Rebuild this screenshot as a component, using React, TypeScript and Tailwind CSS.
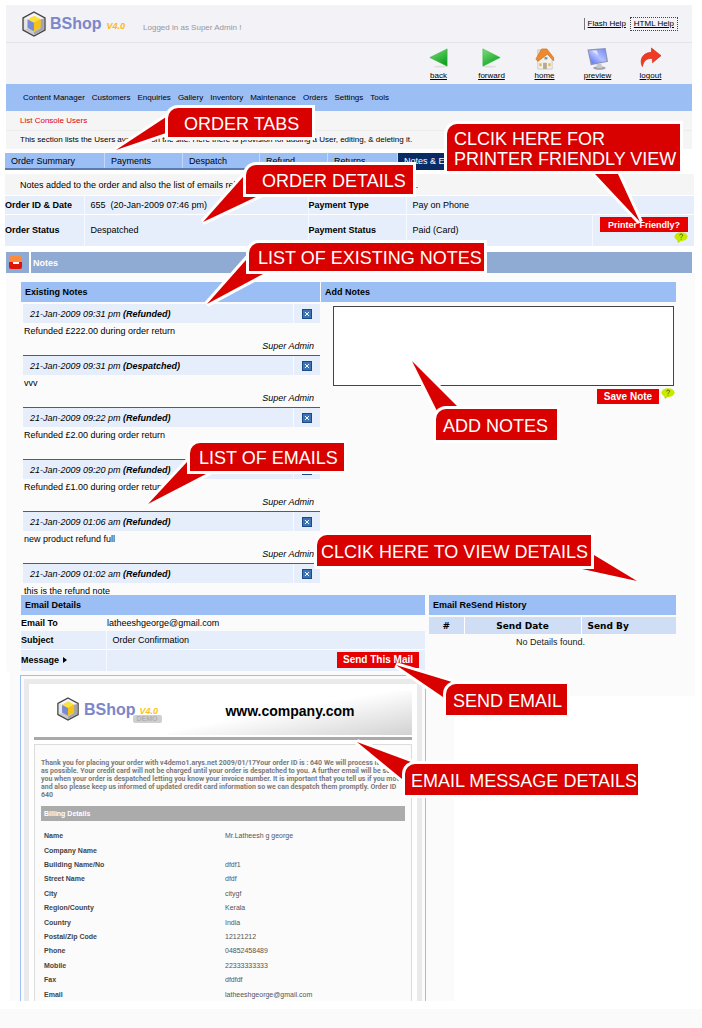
import React from "react";

const navItems = ["Content Manager", "Customers", "Enquiries", "Gallery", "Inventory", "Maintenance", "Orders", "Settings", "Tools"];

const notes = [
  { date: "21-Jan-2009 09:31 pm", status: "(Refunded)", text: "Refunded £222.00 during order return", by: "Super Admin" },
  { date: "21-Jan-2009 09:31 pm", status: "(Despatched)", text: "vvv", by: "Super Admin" },
  { date: "21-Jan-2009 09:22 pm", status: "(Refunded)", text: "Refunded £2.00 during order return", by: "" },
  { date: "21-Jan-2009 09:20 pm", status: "(Refunded)", text: "Refunded £1.00 during order return", by: "Super Admin" },
  { date: "21-Jan-2009 01:06 am", status: "(Refunded)", text: "new product refund full", by: "Super Admin" },
  { date: "21-Jan-2009 01:02 am", status: "(Refunded)", text: "this is the refund note", by: "" },
];

const billing: [string, string][] = [
  ["Name", "Mr.Latheesh g george"],
  ["Company Name", ""],
  ["Building Name/No", "dfdf1"],
  ["Street Name", "dfdf"],
  ["City", "citygf"],
  ["Region/County", "Kerala"],
  ["Country", "India"],
  ["Postal/Zip Code", "12121212"],
  ["Phone", "04852458489"],
  ["Mobile", "22333333333"],
  ["Fax", "dfdfdf"],
  ["Email", "latheeshgeorge@gmail.com"],
];

function Cube({ className }: { className: string }) {
  return (
    <svg viewBox="0 0 24 26" className={className} aria-hidden="true">
      <path d="M12 1 L23 7 V19 L12 25 L1 19 V7 Z" fill="#c9cace" stroke="#444" strokeWidth="1.3" />
      <path d="M12 2.2 L21.8 7.6 L18.5 8.6 L12 5 L5.5 8.6 L2.2 7.6 Z" fill="#f6f6f8" />
      <path d="M2.2 7.6 L5.5 8.6 V17.5 L2.2 18.4 Z" fill="#e6e6ea" />
      <path d="M21.8 7.6 L18.5 8.6 V17.5 L12 21 V23.8 L21.8 18.4 Z" fill="#a4a5ab" />
      <path d="M5.6 8.6 L12.5 4.8 L18.6 8 L12 11.8 Z" fill="#ffe03c" />
      <path d="M18.6 8 V16.4 L12 20.2 V11.8 Z" fill="#f6c313" />
      <path d="M5.6 8.6 L12 11.8 V20.2 L5.6 16.8 Z" fill="#7a8ad4" />
    </svg>
  );
}

function ToolIcon({ name }: { name: string }) {
  return (
    <svg viewBox="0 0 24 24" className="h-[23px] w-[23px]" aria-hidden="true">
      <defs>
        <linearGradient id={"g-" + name} x1="0" y1="0" x2="0.6" y2="1">
          <stop offset="0" stopColor="#7be07a" />
          <stop offset="1" stopColor="#12a022" />
        </linearGradient>
        <linearGradient id={"s-" + name} x1="0" y1="1" x2="1" y2="0">
          <stop offset="0" stopColor="#4c6cf0" />
          <stop offset="0.5" stopColor="#b3c0ff" />
          <stop offset="1" stopColor="#6f88f5" />
        </linearGradient>
      </defs>
      {name === "back" && (
        <>
          <ellipse cx="14" cy="20.5" rx="7" ry="1" fill="#ddd" />
          <path d="M3 11 L21 2 V20 Z" fill={"url(#g-" + name + ")"} stroke="#2eb53a" strokeWidth="0.6" />
        </>
      )}
      {name === "forward" && (
        <>
          <ellipse cx="10" cy="20.5" rx="7" ry="1" fill="#ddd" />
          <path d="M3 2 L21 11 L3 20 Z" fill={"url(#g-" + name + ")"} stroke="#2eb53a" strokeWidth="0.6" />
        </>
      )}
      {name === "home" && (
        <>
          <path d="M5 3 H8 V9 H5 Z" fill="#e8e4e0" stroke="#a98" strokeWidth="0.5" />
          <path d="M5 12 L13 5 L20 12 V23 H5 Z" fill="#f4f1ea" stroke="#b9b3aa" strokeWidth="0.6" />
          <path d="M3 12.5 L9 2 H14.5 L21.5 11 V14.5 L15 7.5 L5 15 Z" fill="#ee8a2e" stroke="#c96412" strokeWidth="0.6" />
          <path d="M10.5 16.5 H14.5 V23 H10.5 Z" fill="#b5aa96" />
          <path d="M12 10.5 H15 V13 H12 Z" fill="#7d93b5" />
          <path d="M16 17 H18.5 V20 H16 Z M6.5 17 H9 V20 H6.5 Z" fill="#d8bd6a" />
        </>
      )}
      {name === "preview" && (
        <>
          <ellipse cx="14" cy="22" rx="6.5" ry="1.8" fill="#a2a4aa" />
          <path d="M11 18 L16 17.5 L17 22 H11.5 Z" fill="#c6c8ce" />
          <path d="M1.5 2.5 L20.5 1 L23 15.5 L5 19 Z" fill="#8d93b8" />
          <path d="M3 3.8 L19.5 2.4 L21.6 14.5 L6 17.5 Z" fill={"url(#s-" + name + ")"} />
          <path d="M6 4 L13 9 L11 3.5 Z" fill="#dfe5ff" />
        </>
      )}
      {name === "logout" && (
        <path d="M13 1 L23 9 L14 16.5 V12 C8 11.5 5 14 3.5 20.5 C-0.5 12 5.5 5.5 13 5.5 Z" fill="#ef3b24" stroke="#c9200f" strokeWidth="0.6" />
      )}
    </svg>
  );
}

function HelpBubble() {
  return (
    <svg viewBox="0 0 14 11" className="h-[11px] w-[14px] shrink-0" role="img" aria-label="Help">
      <path d="M3 7 L4 11 L8 8 Z" fill="#b9d800" />
      <ellipse cx="7" cy="4.6" rx="6.6" ry="4.4" fill="#c8ea00" />
      <path d="M5.6 3.4 C5.6 1.6 8.6 1.6 8.6 3.4 C8.6 4.5 7.1 4.5 7.1 5.8 M7.1 6.8 V7.6" fill="none" stroke="#4a5a00" strokeWidth="0.9" />
    </svg>
  );
}

function Callout({ box, points, children }: { box: string; points: string; children: React.ReactNode }) {
  return (
    <div className={"absolute flex items-center whitespace-nowrap pt-[2px] text-[18px] leading-5 text-white " + box}>
      <svg className="absolute left-0 top-0 h-px w-px overflow-visible" aria-hidden="true">
        <polygon points={points} fill="#d90000" stroke="#fff" strokeWidth="6" paintOrder="stroke" />
      </svg>
      <div className="absolute inset-0 rounded-tl-[10px] bg-[#d90000] ring-[3px] ring-white" />
      <span className="relative">{children}</span>
    </div>
  );
}

const subHead = "flex h-5 items-center bg-[#9bbef5] pl-1 text-[9px] font-bold";
const redButton = "bg-[#e60000] font-bold text-white";

export default function App() {
  return (
    <div className="relative overflow-hidden bg-white pt-[5px] font-['Liberation_Sans',Arial,sans-serif] text-[9px] leading-3 text-black">
      <header className="ml-[6px] mr-[10px] bg-[#f2f2f7]">
        <div className="flex h-[38px] items-center border-b border-[#e3e3e8] pl-4">
          <Cube className="h-[26px] w-6" />
          <span className="ml-1 text-[16px] font-bold leading-5 text-[#7b87c8]">BShop</span>
          <span className="ml-[5px] mt-1 text-[9px] font-bold italic text-[#fdb913]">V4.0</span>
          <span className="ml-[18px] mt-2 text-[8px] text-[#96969c]">Logged in as Super Admin !</span>
          <div className="ml-auto mr-[14px] flex items-center text-[8px]">
            <a href="#flash" className="border-l border-[#777] pl-[3px] underline">Flash Help</a>
            <a href="#html" className="ml-1 border border-dotted border-[#444] px-[3px] underline">HTML Help</a>
          </div>
        </div>
        <div className="flex h-[41px] justify-end pr-[15px] text-[8px]">
          {["back", "forward", "home", "preview", "logout"].map((t) => (
            <a key={t} href={"#" + t} className="flex w-[53px] flex-col items-center pt-1 underline">
              <ToolIcon name={t} />
              {t}
            </a>
          ))}
        </div>
        <nav className="flex h-[27px] items-center gap-[7px] bg-[#9bbef5] pl-[17px] text-[8px]">
          {navItems.map((n) => (
            <a key={n} href="#nav">{n}</a>
          ))}
        </nav>
        <h1 className="flex h-5 items-center border-b border-[#ececec] bg-[#f5f5f5] pl-[14px] text-[8px] text-[#e00010]">List Console Users</h1>
        <p className="flex h-[18px] items-center whitespace-nowrap bg-[#f5f5f5] pl-[14px] text-[8px]">
          This section lists the Users available on the site. Here there is provision for adding a User, editing, &amp; deleting it.
        </p>
      </header>

      <nav className="ml-[5px] mr-[19px] mt-1 flex h-[17px] gap-px border-b-2 border-[#5b7bb0] bg-[#c3d8fa]">
        <a href="#t" className="w-[99px] bg-[#9bbef5] pl-[6px] pt-[2px]">Order Summary</a>
        <a href="#t" className="w-[77px] bg-[#9bbef5] pl-[6px] pt-[2px]">Payments</a>
        <a href="#t" className="w-[76px] bg-[#9bbef5] pl-[6px] pt-[2px]">Despatch</a>
        <a href="#t" className="w-[67px] bg-[#9bbef5] pl-[6px] pt-[2px]">Refund</a>
        <a href="#t" className="w-[69px] bg-[#9bbef5] pl-[6px] pt-[2px]">Returns</a>
        <a href="#t" className="-mb-[2px] w-[78px] bg-[#0a2a66] pl-[6px] pt-[2px] text-white">Notes &amp; Emails</a>
        <span className="flex-1 bg-[#9bbef5]" />
      </nav>

      <p className="ml-[5px] mr-2 mt-1 flex h-[21px] items-center whitespace-nowrap bg-[#f5f5f5] pl-[15px]">
        Notes added to the order and also the list of emails related to the order are displayed here. Details &nbsp;.
      </p>

      <table className="ml-[5px] mt-px w-[calc(100%-13px)] table-fixed border-collapse bg-[#e6eefb] text-left">
        <colgroup>
          <col className="w-[79px]" />
          <col className="w-[224px]" />
          <col className="w-[98px]" />
          <col />
          <col className="w-[101px]" />
        </colgroup>
        <tbody>
          <tr className="h-[18px] border-b border-white">
            <th>Order ID &amp; Date</th>
            <td className="border-l border-[#f6f9ff] pl-[6px]">655 &nbsp;(20-Jan-2009 07:46 pm)</td>
            <th className="border-l border-[#f6f9ff]">Payment Type</th>
            <td className="border-l border-[#f6f9ff] pl-[6px]" colSpan={2}>Pay on Phone</td>
          </tr>
          <tr className="h-8">
            <th>Order Status</th>
            <td className="border-l border-[#f6f9ff] pl-[6px]">Despatched</td>
            <th className="border-l border-[#f6f9ff]">Payment Status</th>
            <td className="border-l border-[#f6f9ff] pl-[6px]">Paid (Card)</td>
            <td className="border-l border-[#f6f9ff] pr-[6px]">
              <div className="flex flex-col items-end">
                <button className={redButton + " h-[15px] w-[88px] text-[9px]"}>Printer Friendly?</button>
                <HelpBubble />
              </div>
            </td>
          </tr>
        </tbody>
      </table>

      <div className="ml-[6px] mr-[10px] mt-[6px] flex h-[21px] gap-[2px]">
        <div className="flex w-[23px] items-center bg-[#8faad3] pl-[3px]">
          <button aria-label="Collapse" className="flex h-[13px] w-[13px] items-center justify-center rounded-[2px] bg-linear-to-b from-[#ff8a3c] from-50% to-[#dd1408] to-50%">
            <span className="h-[2px] w-[6px] bg-white" />
          </button>
        </div>
        <h2 className="flex flex-1 items-center bg-[#8faad3] pl-[2px] text-[9px] font-bold text-white">Notes</h2>
      </div>

      <main className="ml-[6px] mr-[7px] bg-[#fbfbfb] pl-[15px] pr-[19px] pt-[9px]">
        <section className="grid h-[313px] grid-cols-[299fr_355fr] gap-px overflow-hidden">
          <div>
            <h3 className={subHead}>Existing Notes</h3>
            <ul className="ml-[2px] mt-[2px]">
              {notes.map((n, i) => (
                <li key={i} className="h-[52px] border-b border-[#5a5288]">
                  <div className="flex h-[19px] gap-px">
                    <div className="flex flex-1 items-center bg-[#e6eefb] pl-[7px] italic">
                      {n.date}&nbsp;<b>{n.status}</b>
                    </div>
                    <div className="flex w-[26px] items-center justify-center bg-[#e6eefb]">
                      <button aria-label="Delete note" className="flex h-[10px] w-[10px] items-center justify-center border border-[#1c4a86] bg-[#3d74b8]">
                        <svg viewBox="0 0 4 4" className="h-1 w-1" aria-hidden="true">
                          <path d="M0 0 L4 4 M4 0 L0 4" stroke="#fff" strokeWidth="1" />
                        </svg>
                      </button>
                    </div>
                  </div>
                  <p className="pl-px pt-[2px]">{n.text}</p>
                  <p className="pr-[6px] pt-[3px] text-right italic">{n.by}</p>
                </li>
              ))}
            </ul>
          </div>
          <div>
            <h3 className={subHead}><label htmlFor="note">Add Notes</label></h3>
            <textarea id="note" className="ml-3 mr-[3px] mt-1 block h-[80px] w-[calc(100%-14px)] resize-none border border-[#444] bg-white p-1 outline-none" />
            <div className="mr-px mt-[2px] flex items-start justify-end gap-[2px]">
              <button className={redButton + " mt-px h-[15px] w-[62px] text-[10px]"}>Save Note</button>
              <HelpBubble />
            </div>
          </div>
        </section>

        <section className="grid grid-cols-[404fr_247fr] gap-1">
          <div>
            <h3 className={subHead}>Email Details</h3>
            <table className="w-full table-fixed border-collapse text-left">
              <colgroup>
                <col className="w-[85px]" />
                <col />
              </colgroup>
              <tbody>
                <tr className="h-4">
                  <th>Email To</th>
                  <td className="pl-px">latheeshgeorge@gmail.com</td>
                </tr>
                <tr className="h-[18px] border-b border-white bg-[#e6eefb]">
                  <th>Subject</th>
                  <td className="border-l border-[#f6f9ff] pl-[6px]">Order Confirmation</td>
                </tr>
                <tr className="h-[22px] bg-[#e6eefb]">
                  <th>Message <span className="ml-px inline-block h-0 w-0 border-y-[3px] border-l-4 border-y-transparent border-l-black" /></th>
                  <td className="border-l border-[#f6f9ff] pr-[6px] text-right">
                    <button className={redButton + " ml-auto block h-4 w-[82px] text-[10px]"}>Send This Mail</button>
                  </td>
                </tr>
              </tbody>
            </table>
          </div>
          <div>
            <h3 className={subHead}>Email ReSend History</h3>
            <table className="mt-[2px] w-full table-fixed border-collapse">
              <thead>
                <tr className="h-[17px] bg-[#cfddf5] font-['DejaVu_Sans',sans-serif]">
                  <th className="w-[35px]">#</th>
                  <th className="w-[117px] border-x border-white">Send Date</th>
                  <th className="pl-[6px] text-left">Send By</th>
                </tr>
              </thead>
              <tbody>
                <tr className="h-4">
                  <td colSpan={3} className="pr-1 text-center text-[#222]">No Details found.</td>
                </tr>
              </tbody>
            </table>
          </div>
        </section>
      </main>

      <div className="ml-[10px] mr-[7px] grid grid-cols-[444fr_241fr] items-start">
        <article className="h-[330px] overflow-hidden bg-[#fbfbfb] pl-[10px] pr-7 pt-1">
          <div className="border border-[#9bbef5] bg-[#fbfbfb] px-[3px] pt-[3px]">
            <div className="border-x-[5px] border-t-[5px] border-[#eaeaea] bg-white px-[5px] pt-[7px]">
              <div className="flex h-[44px]">
                <div className="flex w-[134px] items-center pl-[22px]">
                  <Cube className="mb-2 h-6 w-6" />
                  <span className="mb-[6px] ml-1 text-[16px] font-bold leading-5 text-[#7b87c8]">BShop</span>
                  <div className="relative mb-1 ml-1">
                    <span className="text-[9px] font-bold italic text-[#fdc21a]">V4.0</span>
                    <span className="absolute -left-[7px] top-[10px] rounded-[2px] bg-[#cfcfcf] px-1 text-[7px] font-bold leading-[8px] text-[#b0b0b0]">DEMO</span>
                  </div>
                </div>
                <div className="flex flex-1 items-center justify-center bg-linear-to-br from-white from-45% to-[#d2d2d2] pb-1 text-[14px] font-bold">
                  www.company.com
                </div>
              </div>
              <div className="mt-[2px] h-[3px] bg-[#a9a9a9]" />
              <div className="mt-1 border-x border-t border-[#dcdcdc] bg-[#fbfbfb] px-[6px] pt-[14px]">
                <p className="whitespace-nowrap font-[Roboto,sans-serif] text-[7px] font-bold leading-[8px] text-[#7a7a7a]">
                  Thank you for placing your order with v4demo1.arys.net 2009/01/17Your order ID is : 640 We will process it as soon<br />
                  as possible. Your credit card will not be charged until your order is despatched to you. A further email will be sent<br />
                  you when your order is despatched letting you know your invoice number. It is important that you tell us if you move<br />
                  and also please keep us informed of updated credit card information so we can despatch them promptly. Order ID<br />
                  640
                </p>
                <h4 className="mt-[7px] flex h-[15px] items-center bg-[#ababab] pl-[3px] text-[7px] font-bold text-white">Billing Details</h4>
                <table className="mt-2 h-[173px] w-full table-fixed border-collapse text-left text-[7px] leading-[8px]">
                  <tbody>
                    {billing.map(([k, v]) => (
                      <tr key={k}>
                        <th className="w-[50%] pl-[3px] text-[#444]">{k}</th>
                        <td className="pl-[2px] text-[#555]">{v}</td>
                      </tr>
                    ))}
                  </tbody>
                </table>
              </div>
            </div>
          </div>
        </article>
        <div className="h-[25px] bg-[#fbfbfb]" />
      </div>
      <footer className="mt-2 h-[19px] bg-[#fafafa]" />

      <Callout box="left-[168px] top-[108px] h-[29px] w-[144px] pl-4" points="-52,42 -2,9 -2,25">ORDER TABS</Callout>
      <Callout box="left-[447px] top-[124px] h-[47px] w-[233px] pl-[7px]" points="193,98 148,50 171,50">
        CLCIK HERE FOR<br />PRINTER FRIENDLY VIEW
      </Callout>
      <Callout box="left-[246px] top-[165px] h-[29px] w-[167px] pl-4" points="-43,57 -3,12 12,31">ORDER DETAILS</Callout>
      <Callout box="left-[249px] top-[243px] h-[28px] w-[235px] pl-[9px]" points="-42,61 -3,17 14,31">LIST OF EXISTING NOTES</Callout>
      <Callout box="left-[436px] top-[409px] h-[31px] w-[121px] pl-[7px]" points="-24,-48 1,2 21,-3">ADD NOTES</Callout>
      <Callout box="left-[190px] top-[443px] h-[28px] w-[154px] pl-[9px]" points="-42,61 -3,19 16,31">LIST OF EMAILS</Callout>
      <Callout box="left-[317px] top-[535px] h-[31px] w-[274px] pl-1" points="320,46 277,20 265,34">CLCIK HERE TO VIEW DETAILS</Callout>
      <Callout box="left-[446px] top-[684px] h-[31px] w-[121px] pl-[7px]" points="-50,-19 6,-2 -3,13">SEND EMAIL</Callout>
      <Callout box="left-[405px] top-[764px] h-[31px] w-[233px] pl-[6px]" points="-48,-22 6,-2 -3,15">EMAIL MESSAGE DETAILS</Callout>
    </div>
  );
}
